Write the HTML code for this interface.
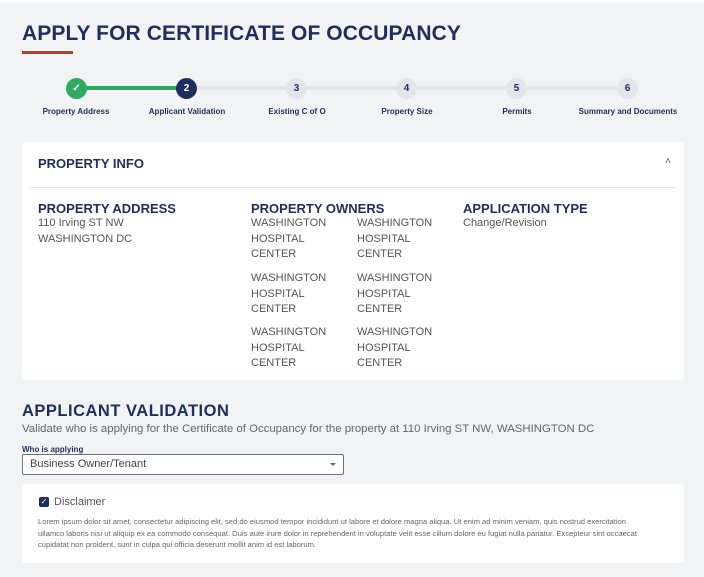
<!DOCTYPE html>
<html><head><style>
*{margin:0;padding:0;box-sizing:border-box}
body{width:704px;height:577px;background:#f2f3f5;font-family:"Liberation Sans",sans-serif;position:relative;overflow:hidden;color:#1f2e5c}
.a{position:absolute}
h1{position:absolute;left:22px;top:22px;font-size:21px;font-weight:bold;color:#1f2e5c;letter-spacing:0.1px}
.c{position:absolute;width:21px;height:21px;border-radius:50%;background:#e3e5ea;color:#1f2e5c;font-size:10px;font-weight:bold;text-align:center;line-height:21px;top:78px}
.l{position:absolute;top:107px;font-size:8px;font-weight:bold;color:#1f2e5c;white-space:nowrap;transform:translateX(-50%)}
.card{position:absolute;background:#fff;border-radius:3px}
.h{font-size:13px;font-weight:bold;color:#1f2e5c}
.t{font-size:11px;color:#555;line-height:15.6px}
</style></head><body>
<div class="a" style="left:0;top:0;width:704px;height:2px;background:#fff"></div>
<h1>APPLY FOR CERTIFICATE OF OCCUPANCY</h1>
<div class="a" style="left:22px;top:51px;width:51px;height:3px;background:#c0392b"></div>
<div class="a" style="left:76px;top:86px;width:552px;height:4px;background:#e3e5ea"></div>
<div class="a" style="left:76px;top:86px;width:111px;height:4px;background:#2eaa62"></div>
<div class="c" style="left:66px;background:#2eaa62;color:#fff">✓</div>
<div class="c" style="left:176px;background:#1f2e5c;color:#fff">2</div>
<div class="c" style="left:286px">3</div>
<div class="c" style="left:396px">4</div>
<div class="c" style="left:506px">5</div>
<div class="c" style="left:617px">6</div>
<div class="l" style="left:76px">Property Address</div>
<div class="l" style="left:187px">Applicant Validation</div>
<div class="l" style="left:297px">Existing C of O</div>
<div class="l" style="left:407px">Property Size</div>
<div class="l" style="left:517px">Permits</div>
<div class="l" style="left:628px">Summary and Documents</div>

<div class="card" style="left:22px;top:142px;width:662px;height:238px"></div>
<div class="a h" style="left:38px;top:156px">PROPERTY INFO</div>
<div class="a" style="left:665px;top:156px;font-size:10px;color:#555">˄</div>
<div class="a" style="left:30px;top:187px;width:646px;height:1px;background:#e3e5ea"></div>
<div class="a h" style="left:38px;top:201px">PROPERTY ADDRESS</div>
<div class="a t" style="left:38px;top:216px">110 Irving ST NW<br>WASHINGTON DC</div>
<div class="a h" style="left:251px;top:201px">PROPERTY OWNERS</div>
<div class="a t" style="left:251px;top:216px">WASHINGTON<br>HOSPITAL<br>CENTER</div>
<div class="a t" style="left:357px;top:216px">WASHINGTON<br>HOSPITAL<br>CENTER</div>
<div class="a t" style="left:251px;top:271px">WASHINGTON<br>HOSPITAL<br>CENTER</div>
<div class="a t" style="left:357px;top:271px">WASHINGTON<br>HOSPITAL<br>CENTER</div>
<div class="a t" style="left:251px;top:325px">WASHINGTON<br>HOSPITAL<br>CENTER</div>
<div class="a t" style="left:357px;top:325px">WASHINGTON<br>HOSPITAL<br>CENTER</div>
<div class="a h" style="left:463px;top:201px">APPLICATION TYPE</div>
<div class="a t" style="left:463px;top:216px">Change/Revision</div>

<div class="a" style="left:22px;top:402px;font-size:16.5px;font-weight:bold;letter-spacing:0.5px">APPLICANT VALIDATION</div>
<div class="a" style="left:22px;top:423px;font-size:11.4px;color:#666">Validate who is applying for the Certificate of Occupancy for the property at 110 Irving ST NW, WASHINGTON DC</div>
<div class="a" style="left:22px;top:445px;font-size:8px;font-weight:bold">Who is applying</div>
<div class="a" style="left:22px;top:454px;width:322px;height:21px;background:#fff;border:1px solid #6b7080;border-radius:2px;font-size:11px;color:#444;padding:3px 7px">Business Owner/Tenant</div>
<div class="a" style="left:330px;top:463px;border-left:3px solid transparent;border-right:3px solid transparent;border-top:3px solid #666"></div>

<div class="card" style="left:22px;top:484px;width:662px;height:79px"></div>
<div class="a" style="left:39px;top:497px;width:10px;height:10px;background:#1f2e5c;border-radius:2px;color:#fff;font-size:8px;line-height:10px;text-align:center">✓</div>
<div class="a" style="left:54px;top:496px;font-size:11px;color:#555">Disclaimer</div>
<div class="a" style="left:38px;top:516px;width:615px;font-size:7.6px;line-height:11.5px;color:#666">Lorem ipsum dolor sit amet, consectetur adipiscing elit, sed do eiusmod tempor incididunt ut labore et dolore magna aliqua. Ut enim ad minim veniam, quis nostrud exercitation ullamco laboris nisi ut aliquip ex ea commodo consequat. Duis aute irure dolor in reprehenderit in voluptate velit esse cillum dolore eu fugiat nulla pariatur. Excepteur sint occaecat cupidatat non proident, sunt in culpa qui officia deserunt mollit anim id est laborum.</div>
</body></html>
